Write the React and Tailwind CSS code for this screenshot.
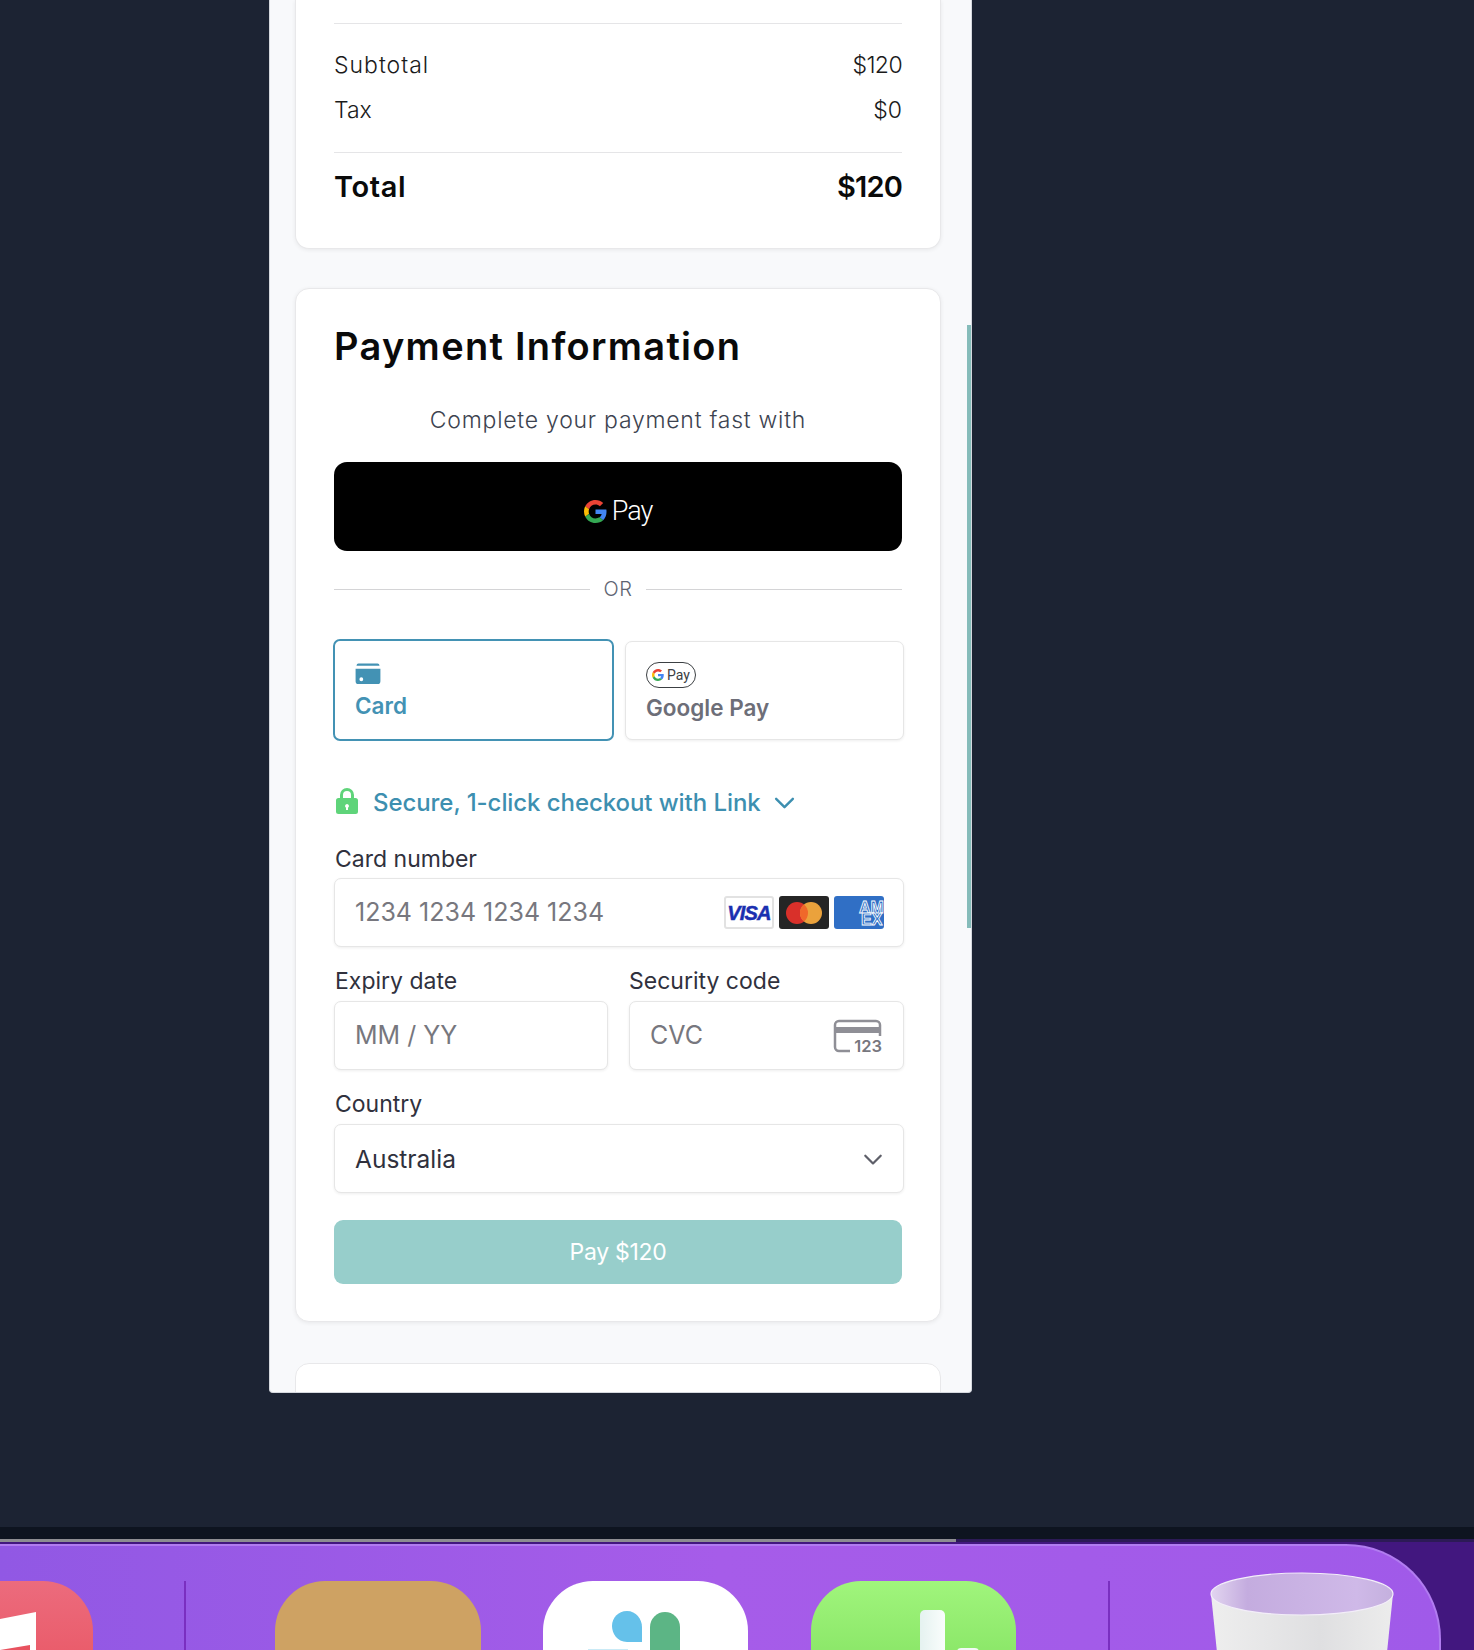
import React from 'react';

function GoogleG({ className }) {
    return (
        <svg viewBox="0 0 48 48" className={className}>
            <path fill="#EA4335" d="M24 9.500c3.500 0 6.700 1.200 9.200 3.600l6.900-6.900C35.900 2.400 30.400 0 24 0 14.600 0 6.500 5.400 2.600 13.200l8 6.200C12.500 13.700 17.800 9.500 24 9.500z" />
            <path fill="#4285F4" d="M47 24.500c0-1.600-.1-3.100-.4-4.500H24v9h12.900c-.6 3-2.200 5.500-4.700 7.200l7.700 6c4.500-4.200 7.100-10.300 7.100-17.700z" />
            <path fill="#FBBC05" d="M10.600 28.600c-.5-1.400-.8-3-.8-4.600s.3-3.200.8-4.600l-8-6.200C.9 16.500 0 20.100 0 24s.9 7.500 2.600 10.800l8-6.200z" />
            <path fill="#34A853" d="M24 48c6.500 0 11.900-2.100 15.900-5.800l-7.700-6c-2.200 1.500-5 2.300-8.200 2.300-6.200 0-11.500-4.200-13.400-9.900l-8 6.200C6.500 42.600 14.600 48 24 48z" />
        </svg>
    );
}

function Field({ children, className = '' }) {
    return (
        <div className={`h-[69px] flex items-center rounded-[7px] border border-[#e6e6e6] bg-white pl-[20px] pt-px shadow-[0_1px_3px_rgba(0,0,0,0.07)] text-[25px] ${className}`}>
            {children}
        </div>
    );
}

function Label({ children, className = '' }) {
    return <div className={`h-[24px] flex items-center text-[23px] text-[#30313d] ${className}`}>{children}</div>;
}

function Chevron({ className, color }) {
    return (
        <svg viewBox="0 0 22 14" className={className} fill="none">
            <path d="M2 2l9 9 9-9" stroke={color} strokeWidth="2.600" strokeLinecap="round" strokeLinejoin="round" />
        </svg>
    );
}

function CardBrands() {
    return (
        <div className="ml-auto mr-[19px] -mt-px flex gap-[5px]">
            <div className="w-[50px] h-[33px] rounded-[3px] border-2 border-[#e2e2e2] bg-white flex items-center justify-center font-['Liberation_Sans'] italic font-bold text-[20px] tracking-[-0.8px] text-[#1a2fb0] [-webkit-text-stroke:0.5px_#1a2fb0]">VISA</div>
            <div className="w-[50px] h-[33px] rounded-[3px] bg-[#252525] flex items-center justify-center">
                <svg viewBox="0 0 38 24" className="w-[38px] h-[24px]">
                    <circle cx="12" cy="12" r="11" fill="#d9302a" />
                    <circle cx="26" cy="12" r="11" fill="#eba23c" />
                    <path d="M19 3.500a11 11 0 0 1 0 17 11 11 0 0 1 0-17z" fill="#f0682a" />
                </svg>
            </div>
            <div className="w-[50px] h-[33px] rounded-[3px] bg-[#306fc5] overflow-hidden">
                <svg viewBox="0 0 50 33" className="w-[50px] h-[33px] font-['Liberation_Sans'] font-bold" fill="#306fc5" stroke="#ffffff" strokeWidth="0.800">
                    <text x="25" y="17" fontSize="16">AM</text>
                    <text x="27" y="29" fontSize="16">EX</text>
                </svg>
            </div>
        </div>
    );
}

function CvcIcon() {
    return (
        <div className="relative ml-auto mr-[21px] w-[49px] h-[34px]">
            <svg viewBox="0 0 49 34" className="w-[49px] h-[34px]" fill="none">
                <path d="M47 17V6a4 4 0 0 0-4-4H6a4 4 0 0 0-4 4v22a4 4 0 0 0 4 4h11" stroke="#8f8f96" strokeWidth="2.500" />
                <rect x="2" y="8" width="45" height="6" fill="#8f8f96" />
            </svg>
            <span className="absolute right-0 bottom-[-3px] font-semibold text-[16.500px] leading-[20px] text-[#77777e]">123</span>
        </div>
    );
}

function Dock() {
    return (
        <div className="relative h-[106px] w-[1441px] rounded-tr-[95px] border-t-2 border-r-2 border-[#b17cf0] bg-gradient-to-r from-[#9158e4] via-[#a65ce9] to-[#a05ae9] pt-[35px] flex items-start overflow-hidden">
            <div className="-ml-[113px] w-[206px] h-[120px] rounded-t-[50px] bg-gradient-to-b from-[#ec6b7d] to-[#e8525f] overflow-hidden">
                <svg viewBox="0 0 206 70" className="w-[206px] h-[70px]">
                    <path d="M113 38l36-7v38h-36z" fill="#fff" />
                    <path d="M113 69l30-5v5z" fill="#e8525f" />
                </svg>
            </div>
            <div className="ml-[91px] w-[2px] h-[70px] bg-[#7a2fc0]" />
            <div className="ml-[89px] w-[206px] h-[120px] rounded-t-[50px] bg-[#cea263]" />
            <div className="ml-[62px] w-[205px] h-[120px] rounded-t-[50px] bg-white">
                <svg viewBox="0 0 205 70" className="w-[205px] h-[70px]">
                    <path d="M99 61H84C74 61 69 52 69 45 69 37 75 30 84 30 93 30 99 38 99 46z" fill="#65c1ea" />
                    <path d="M107 69V46a15 15 0 0 1 30 0v23z" fill="#5cb585" />
                    <rect x="45" y="68" width="40" height="2" fill="#c9eaf6" />
                </svg>
            </div>
            <div className="ml-[63px] w-[205px] h-[120px] rounded-t-[50px] bg-gradient-to-b from-[#a0f57c] to-[#7ede5c]">
                <div className="flex items-start gap-[12px] pl-[109px] pt-[29px]">
                    <div className="w-[25px] h-[50px] rounded-t-[5px] bg-gradient-to-r from-[#e5f2f0] to-[#fafdfc]" />
                    <div className="mt-[38px] w-[22px] h-[12px] rounded-t-[4px] bg-[#f2f9f6]" />
                </div>
            </div>
            <div className="ml-[92px] w-[2px] h-[70px] bg-[#7a2fc0]" />
            <div className="ml-[100px] -mt-[9px] w-[184px] h-[90px]">
                <svg viewBox="0 0 184 90" className="w-[184px] h-[90px]">
                    <defs>
                        <linearGradient id="bin" x1="0" x2="1" y1="0" y2="0">
                            <stop offset="0" stopColor="#eeeeee" />
                            <stop offset="0.6" stopColor="#dfdfe1" />
                            <stop offset="1" stopColor="#ececec" />
                        </linearGradient>
                        <linearGradient id="binTop" x1="0" x2="1" y1="0" y2="0">
                            <stop offset="0" stopColor="#e2d5f0" />
                            <stop offset="0.2" stopColor="#c4acdf" />
                            <stop offset="0.8" stopColor="#cfb9e8" />
                            <stop offset="1" stopColor="#c4b0de" />
                        </linearGradient>
                    </defs>
                    <path d="M1 22L8 90H176L183 22z" fill="url(#bin)" />
                    <ellipse cx="92" cy="22" rx="91" ry="21" fill="url(#binTop)" stroke="#f3eef9" strokeWidth="1.200" />
                </svg>
            </div>
        </div>
    );
}

export default function App() {
    return (
        <div className="w-[1474px] h-[1650px] overflow-hidden flex flex-col bg-[#1c2333] font-['Inter',sans-serif]">
            <div className="h-[1527px] shrink-0">
                <div className="relative ml-[269px] w-[703px] h-[1393px] rounded-b-[4px] border-x border-b border-[#d5d8de] bg-[#f8f9fb] overflow-hidden">
                    {/* summary card, top is scrolled away */}
                    <div className="ml-[25px] w-[646px] h-[249px] rounded-b-[14px] border-x border-b border-[#e8e8ea] bg-white px-[38px] pt-[23px] shadow-[0_1px_4px_rgba(0,0,0,0.07)]">
                        <div className="border-t border-[#e5e5e7] pt-[19px] text-[23px] text-[#1a1a1a] font-light">
                            <div className="h-[45px] flex items-center justify-between">
                                <span className="tracking-[1px]">Subtotal</span>
                                <span className="tracking-[-0.6px]">$120</span>
                            </div>
                            <div className="h-[45px] flex items-center justify-between">
                                <span>Tax</span>
                                <span>$0</span>
                            </div>
                        </div>
                        <div className="mt-[19px] border-t border-[#e5e5e7] h-[68px] flex items-center justify-between text-[29px] font-semibold text-[#0a0a0a]">
                            <span className="tracking-[0.6px]">Total</span>
                            <span className="tracking-[-0.8px]">$120</span>
                        </div>
                    </div>

                    {/* payment card */}
                    <div className="ml-[25px] mt-[39px] w-[646px] h-[1034px] rounded-[14px] border border-[#e8e8ea] bg-white px-[38px] pt-[27px] shadow-[0_1px_4px_rgba(0,0,0,0.07)]">
                        <h2 className="h-[60px] flex items-center text-[38px] tracking-[1.3px] font-semibold text-[#0a0a0a]">Payment Information</h2>
                        <p className="mt-[29px] h-[30px] flex items-center justify-center text-[23px] tracking-[0.75px] font-light text-[#3d4350]">Complete your payment fast with</p>

                        <button className="mt-[27px] w-full h-[89px] rounded-[13px] bg-black flex items-center justify-center gap-[5px] pt-[9px]">
                            <GoogleG className="w-[23px] h-[23px]" />
                            <span className="font-['Roboto'] font-light text-[27px] leading-[30px] tracking-[-1px] text-white">Pay</span>
                        </button>

                        <div className="mt-[28px] h-[20px] flex items-center gap-[13px]">
                            <div className="flex-1 h-px bg-[#d4d4d6]" />
                            <span className="text-[20px] tracking-[0.7px] font-light text-[#5e6472]">OR</span>
                            <div className="flex-1 h-px bg-[#d4d4d6]" />
                        </div>

                        <div className="mt-[40px] -ml-px -mr-[2px] flex items-center gap-[11px]">
                            <div className="w-[281px] h-[102px] rounded-[7px] border-2 border-[#4392b4] bg-white pl-[20px] pt-[22px] text-[#4392b4]">
                                <svg viewBox="0 0 26 22" className="w-[26px] h-[21px]">
                                    <path d="M1 2.500a2 2 0 0 1 2-2h20a2 2 0 0 1 2 2V3H1zM0 6h26v13a3 3 0 0 1-3 3H3a3 3 0 0 1-3-3zm6 9a2 2 0 1 0 0 4 2 2 0 0 0 0-4z" fill="#4392b4" fillRule="evenodd" />
                                </svg>
                                <div className="mt-[8px] text-[22.500px] leading-[28px] font-semibold">Card</div>
                            </div>
                            <div className="w-[279px] h-[99px] rounded-[7px] border border-[#e6e6e6] bg-white pl-[20px] pt-[20px] shadow-[0_1px_3px_rgba(0,0,0,0.07)] text-[#6d6e78]">
                                <div className="w-[50px] h-[26px] rounded-[13px] border border-[#3c4043] flex items-center justify-center gap-[3px]">
                                    <GoogleG className="w-[12px] h-[12px]" />
                                    <span className="font-['Roboto'] text-[14px] leading-[16px] text-[#3c4043]">Pay</span>
                                </div>
                                <div className="mt-[6px] text-[22.500px] leading-[28px] font-semibold">Google Pay</div>
                            </div>
                        </div>

                        <div className="mt-[47px] h-[30px] flex items-center">
                            <svg viewBox="0 0 22 26" className="ml-[2px] -mt-[4px] w-[22px] h-[26px]">
                                <path d="M4 10V7a7 7 0 0 1 14 0v3h1.500A2.500 2.500 0 0 1 22 12.500v11a2.500 2.500 0 0 1-2.500 2.500h-17A2.500 2.500 0 0 1 0 23.500v-11A2.500 2.500 0 0 1 2.500 10zm3 0h8V7a4 4 0 0 0-8 0zm4 6a2 2 0 0 0-1 3.700V22h2v-2.300A2 2 0 0 0 11 16z" fill="#5fd47a" fillRule="evenodd" />
                            </svg>
                            <span className="ml-[15px] text-[24px] tracking-[-0.07px] font-medium text-[#3d8fb0]">Secure, 1-click checkout with Link</span>
                            <Chevron className="ml-[13px] w-[21px] h-[13px]" color="#3d8fb0" />
                        </div>

                        <Label className="mt-[29px] ml-px">Card number</Label>
                        <Field className="mt-[7px] w-[570px] text-[#77777e]">
                            <span>1234 1234 1234 1234</span>
                            <CardBrands />
                        </Field>

                        <div className="mt-[22px] w-[570px] grid grid-cols-[274px_275px] gap-x-[21px]">
                            <div>
                                <Label className="ml-px">Expiry date</Label>
                                <Field className="mt-[8px] text-[#77777e]">MM / YY</Field>
                            </div>
                            <div>
                                <Label>Security code</Label>
                                <Field className="mt-[8px] text-[#77777e]">
                                    <span>CVC</span>
                                    <CvcIcon />
                                </Field>
                            </div>
                        </div>

                        <Label className="mt-[22px] ml-px">Country</Label>
                        <Field className="mt-[8px] w-[570px] text-[#30313d]">
                            <span className="text-[24.500px]">Australia</span>
                            <Chevron className="ml-auto mr-[20px] mt-[2px] w-[20px] h-[12px]" color="#5e5f69" />
                        </Field>

                        <button className="mt-[27px] w-full h-[64px] rounded-[9px] bg-[#97cecb] text-[23px] tracking-[-0.3px] font-normal text-white">Pay $120</button>
                    </div>

                    {/* next card, cut off by the panel */}
                    <div className="ml-[25px] mt-[41px] w-[646px] h-[60px] rounded-t-[14px] border border-[#e8e8ea] bg-white" />

                    <div className="absolute right-0 top-[325px] w-[4px] h-[603px] bg-[#86bcba]" />
                </div>
            </div>

            <div className="h-[12px] shrink-0 bg-[#0e1420]" />
            <div className="h-[3px] shrink-0 bg-[#2c1a56]">
                <div className="w-[956px] h-[3px] bg-[#8d8d92]" />
            </div>
            <div className="flex-1 bg-[#42177f] pt-[2px]">
                <Dock />
            </div>
        </div>
    );
}
